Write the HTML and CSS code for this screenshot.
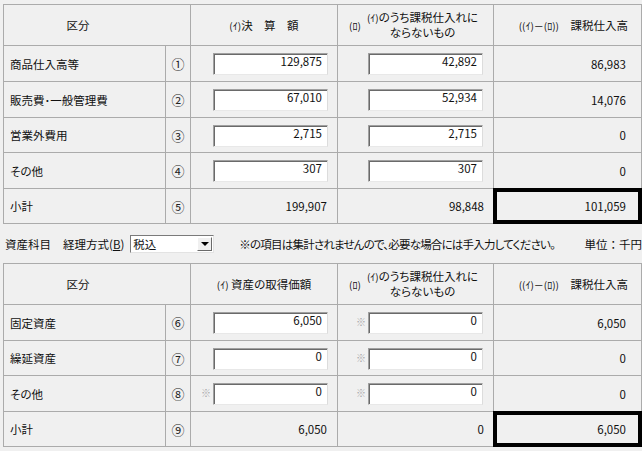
FILE: index.html
```html
<!DOCTYPE html>
<html lang="ja">
<head>
<meta charset="utf-8">
<link rel="stylesheet" href="styles.css">
</head>
<body>
<div class="page">
  <div class="grid top">
    <div class="c h kubun">区分</div>
    <div class="c h"><span class="sm">(ｲ)</span>決　算　額</div>
    <div class="c h hro"><span class="sm ro">(ﾛ)</span><span class="h2t"><span class="sm">(ｲ)</span>のうち課税仕入れに<br>ならないもの</span></div>
    <div class="c h hha"><span class="sm">((ｲ)－(ﾛ))</span>　課税仕入高</div>

    <div class="c lbl">商品仕入高等</div>
    <div class="c no">①</div>
    <div class="c in1"><span class="mk"></span><div class="field">129,875</div></div>
    <div class="c in2"><span class="mk"></span><div class="field">42,892</div></div>
    <div class="c val3">86,983</div>

    <div class="c lbl">販売費･一般管理費</div>
    <div class="c no">②</div>
    <div class="c in1"><span class="mk"></span><div class="field">67,010</div></div>
    <div class="c in2"><span class="mk"></span><div class="field">52,934</div></div>
    <div class="c val3">14,076</div>

    <div class="c lbl">営業外費用</div>
    <div class="c no">③</div>
    <div class="c in1"><span class="mk"></span><div class="field">2,715</div></div>
    <div class="c in2"><span class="mk"></span><div class="field">2,715</div></div>
    <div class="c val3">0</div>

    <div class="c lbl">その他</div>
    <div class="c no">④</div>
    <div class="c in1"><span class="mk"></span><div class="field">307</div></div>
    <div class="c in2"><span class="mk"></span><div class="field">307</div></div>
    <div class="c val3">0</div>

    <div class="c lbl">小計</div>
    <div class="c no">⑤</div>
    <div class="c val1">199,907</div>
    <div class="c val2">98,848</div>
    <div class="c val3 thick">101,059</div>
  </div>

  <div class="bar">
    <span class="kamoku">資産科目</span>
    <span class="houshiki">経理方式(<u>B</u>)</span>
    <div class="select"><span class="sel-text">税込</span><span class="sel-btn"><span class="tri"></span></span></div>
    <span class="note">※の項目は集計されませんので、必要な場合には手入力してください。</span>
    <span class="unit">単位：千円</span>
  </div>

  <div class="grid bottom">
    <div class="c h kubun">区分</div>
    <div class="c h"><span class="sm">(ｲ)</span>&nbsp;資産の取得価額</div>
    <div class="c h hro"><span class="sm ro">(ﾛ)</span><span class="h2t"><span class="sm">(ｲ)</span>のうち課税仕入れに<br>ならないもの</span></div>
    <div class="c h hha"><span class="sm">((ｲ)－(ﾛ))</span>　課税仕入高</div>

    <div class="c lbl">固定資産</div>
    <div class="c no">⑥</div>
    <div class="c in1"><span class="mk"></span><div class="field">6,050</div></div>
    <div class="c in2"><span class="mk">※</span><div class="field">0</div></div>
    <div class="c val3">6,050</div>

    <div class="c lbl">繰延資産</div>
    <div class="c no">⑦</div>
    <div class="c in1"><span class="mk"></span><div class="field">0</div></div>
    <div class="c in2"><span class="mk">※</span><div class="field">0</div></div>
    <div class="c val3">0</div>

    <div class="c lbl">その他</div>
    <div class="c no">⑧</div>
    <div class="c in1"><span class="mk">※</span><div class="field">0</div></div>
    <div class="c in2"><span class="mk">※</span><div class="field">0</div></div>
    <div class="c val3">0</div>

    <div class="c lbl">小計</div>
    <div class="c no">⑨</div>
    <div class="c val1">6,050</div>
    <div class="c val2">0</div>
    <div class="c val3 thick">6,050</div>
  </div>
</div>
</body>
</html>
```
FILE: styles.css
```css
body {
  margin: 0;
  background: #f0f0f0;
  font-family: "Noto Sans CJK JP", sans-serif;
  font-size: 11.5px;
  color: #111;
  font-feature-settings: "palt";
}
.page {
  padding: 4px 0 0 3px;
  width: 639px;
}
.grid {
  display: grid;
  grid-template-columns: 161px 24px 146px 155px 147px;
  gap: 1px;
  background: #ababab;
  border: 1px solid #ababab;
}
.top { grid-template-rows: 40px 35px 35px 34px 35px 34px; }
.bottom { grid-template-rows: 40px 35px 34px 35px 34px; }
.c {
  background: #f0f0f0;
  display: flex;
  align-items: center;
  min-width: 0;
  white-space: nowrap;
}
.h { justify-content: center; }
.kubun { grid-column: span 2; padding-right: 38px; }
.sm { font-size: 10px; }
.hro { justify-content: flex-start; padding-left: 11px; padding-right: 12px; }
.ro { width: 15px; }
.h2t { flex: 1; text-align: center; line-height: 15px; }
.hha { justify-content: flex-end; padding-right: 13px; }
.lbl { padding-left: 6px; }
.no { justify-content: center; font-size: 13px; color: #222; }
.in1, .in2 { align-items: flex-start; padding-top: 7px; }
.in1 { padding-left: 8px; }
.in2 { padding-left: 16px; }
.mk {
  width: 12px;
  margin-right: 2px;
  margin-top: 3px;
  text-align: right;
  color: #a8a8a8;
  font-size: 10px;
  line-height: 14px;
}
.field {
  width: 115px;
  height: 22px;
  box-sizing: border-box;
  background: #fff;
  border-top: 1px solid #a0a0a0;
  border-left: 1px solid #a0a0a0;
  border-right: 1px solid #dcdcdc;
  border-bottom: 1px solid #e8e8e8;
  box-shadow: inset 1px 1px 0 #6a6a6a;
  text-align: right;
  padding-right: 5px;
  padding-top: 0;
  line-height: 14px;
}
.val1, .val2, .val3 { justify-content: flex-end; }
.val1 { padding-right: 10px; }
.val2 { padding-right: 9px; }
.val3 { padding-right: 15px; }
.thick {
  outline: 4px solid #000;
  outline-offset: -3px;
}
.bar {
  height: 39px;
  display: flex;
  align-items: center;
  padding-left: 2px;
}
.kamoku { margin-right: 12px; }
.houshiki { margin-right: 6px; }
.select {
  width: 84px;
  height: 18px;
  box-sizing: border-box;
  background: #fff;
  border-top: 1px solid #7a7a7a;
  border-left: 1px solid #7a7a7a;
  border-right: 1px solid #e3e3e3;
  border-bottom: 1px solid #e3e3e3;
  display: flex;
  align-items: center;
}
.sel-text { flex: 1; padding-left: 2px; line-height: 14px; }
.sel-btn {
  width: 15px;
  height: 14px;
  margin-right: 1px;
  box-sizing: border-box;
  background: #f0f0f0;
  border-top: 1px solid #fff;
  border-left: 1px solid #fff;
  border-right: 1px solid #6a6a6a;
  border-bottom: 1px solid #6a6a6a;
  display: flex;
  align-items: center;
  justify-content: center;
}
.tri {
  width: 0;
  height: 0;
  border-top: 4px solid #000;
  border-left: 4px solid transparent;
  border-right: 4px solid transparent;
}
.note { margin-left: 25px; letter-spacing: -0.8px; }
.unit { margin-left: auto; font-feature-settings: normal; }
```
